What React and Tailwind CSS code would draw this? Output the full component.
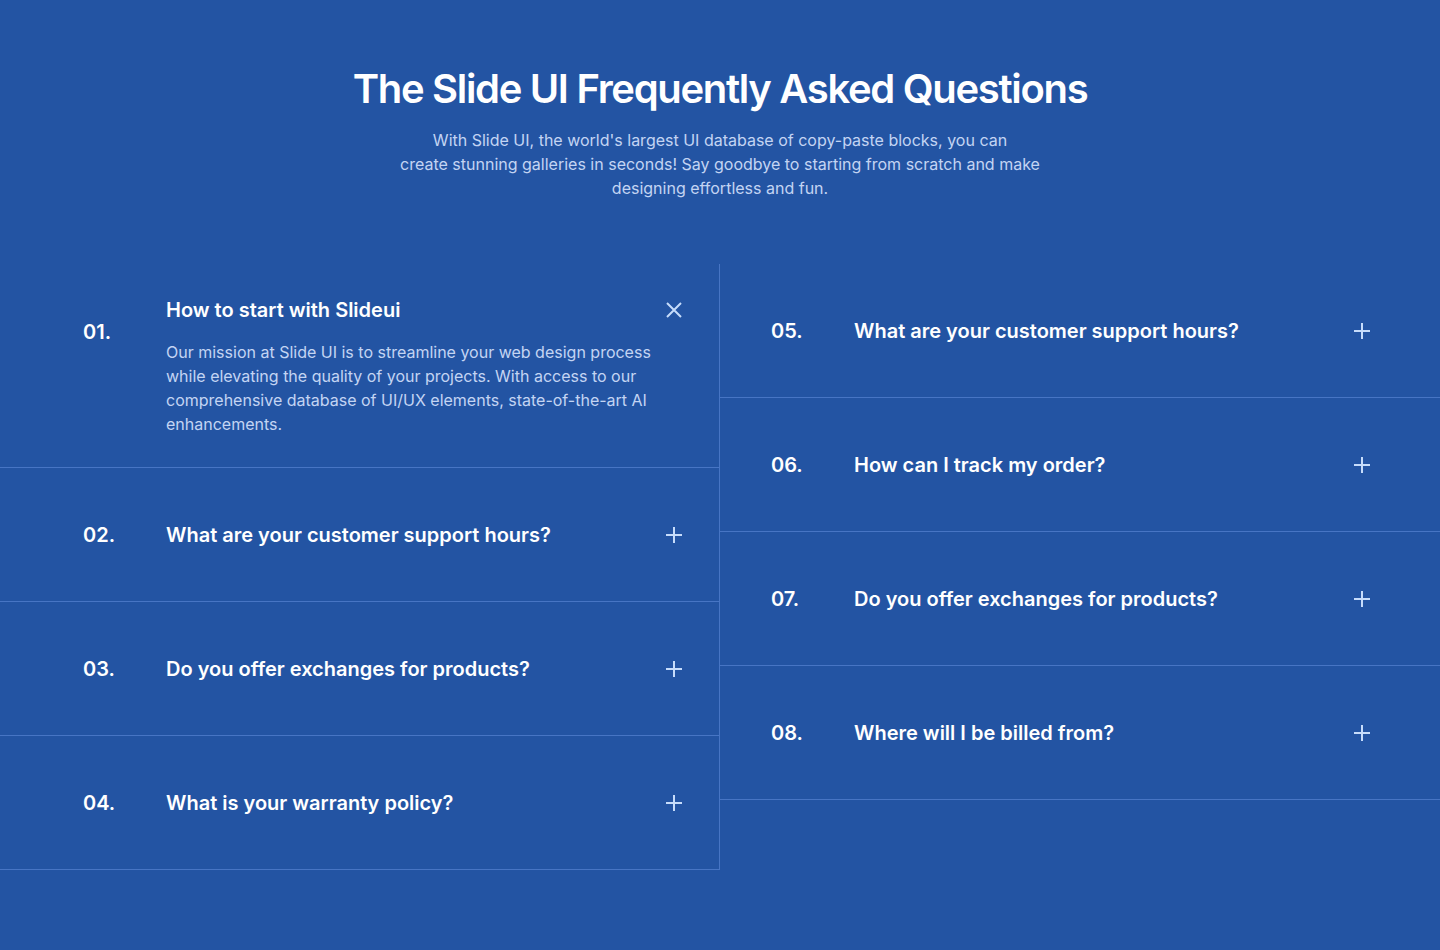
const leftFaqs = [
  {
    num: "01.",
    q: "How to start with Slideui",
    a: "Our mission at Slide UI is to streamline your web design process while elevating the quality of your projects. With access to our comprehensive database of UI/UX elements, state-of-the-art AI enhancements.",
    open: true,
  },
  { num: "02.", q: "What are your customer support hours?" },
  { num: "03.", q: "Do you offer exchanges for products?" },
  { num: "04.", q: "What is your warranty policy?" },
];

const rightFaqs = [
  { num: "05.", q: "What are your customer support hours?" },
  { num: "06.", q: "How can I track my order?" },
  { num: "07.", q: "Do you offer exchanges for products?" },
  { num: "08.", q: "Where will I be billed from?" },
];

const PlusIcon = () => (
  <svg width="18" height="18" viewBox="0 0 18 18" fill="none" stroke="currentColor" strokeWidth="2">
    <path d="M9 1v16M1 9h16" />
  </svg>
);

const CloseIcon = () => (
  <svg width="16" height="16" viewBox="0 0 16 16" fill="none" stroke="currentColor" strokeWidth="2">
    <path d="M1 1l14 14M15 1L1 15" />
  </svg>
);

function FaqRow({ item, side }) {
  const pad =
    side === "left" ? "pl-[83px] pr-[36px]" : "pl-[51px] pr-[69px]";

  if (item.open) {
    return (
      <div className={`flex border-b border-[#4775c4] pt-8 pb-[31px] ${pad}`}>
        <div className="w-[83px] shrink-0 pt-[22px] text-xl font-semibold leading-7 text-white">
          {item.num}
        </div>
        <div className="flex-1">
          <h3 className="text-xl font-semibold leading-7 text-white">{item.q}</h3>
          <p className="mt-4 text-base leading-6 text-[#c3d4f3]">{item.a}</p>
        </div>
        <div className="flex h-7 w-[18px] shrink-0 items-center justify-center text-[#c6dcfb]">
          <CloseIcon />
        </div>
      </div>
    );
  }

  return (
    <div className={`flex h-[134px] items-center border-b border-[#4775c4] ${pad}`}>
      <div className="w-[83px] shrink-0 text-xl font-semibold leading-7 text-white">
        {item.num}
      </div>
      <h3 className="flex-1 text-xl font-semibold leading-7 text-white">{item.q}</h3>
      <div className="flex h-7 w-[18px] shrink-0 items-center justify-center text-[#c6dcfb]">
        <PlusIcon />
      </div>
    </div>
  );
}

export default function App() {
  return (
    <div
      className="min-h-[950px] bg-[#2354a3] pt-[65px]"
      style={{ fontFamily: "Inter, 'Noto Sans', sans-serif" }}
    >
      <div className="text-center">
        <h1 className="text-[40px] font-semibold leading-[48px] tracking-[-0.033em] text-white">
          The Slide UI Frequently Asked Questions
        </h1>
        <p className="mx-auto mt-[15px] max-w-[660px] text-base leading-6 text-[#c3d4f3]">
          With Slide UI, the world's largest UI database of copy-paste blocks, you can
          <br />
          create stunning galleries in seconds! Say goodbye to starting from scratch and make
          designing effortless and fun.
        </p>
      </div>

      <div className="mt-16 grid grid-cols-2 items-start">
        <div className="border-r border-[#4775c4]">
          {leftFaqs.map((item) => (
            <FaqRow key={item.num} item={item} side="left" />
          ))}
        </div>
        <div>
          {rightFaqs.map((item) => (
            <FaqRow key={item.num} item={item} side="right" />
          ))}
        </div>
      </div>
    </div>
  );
}
